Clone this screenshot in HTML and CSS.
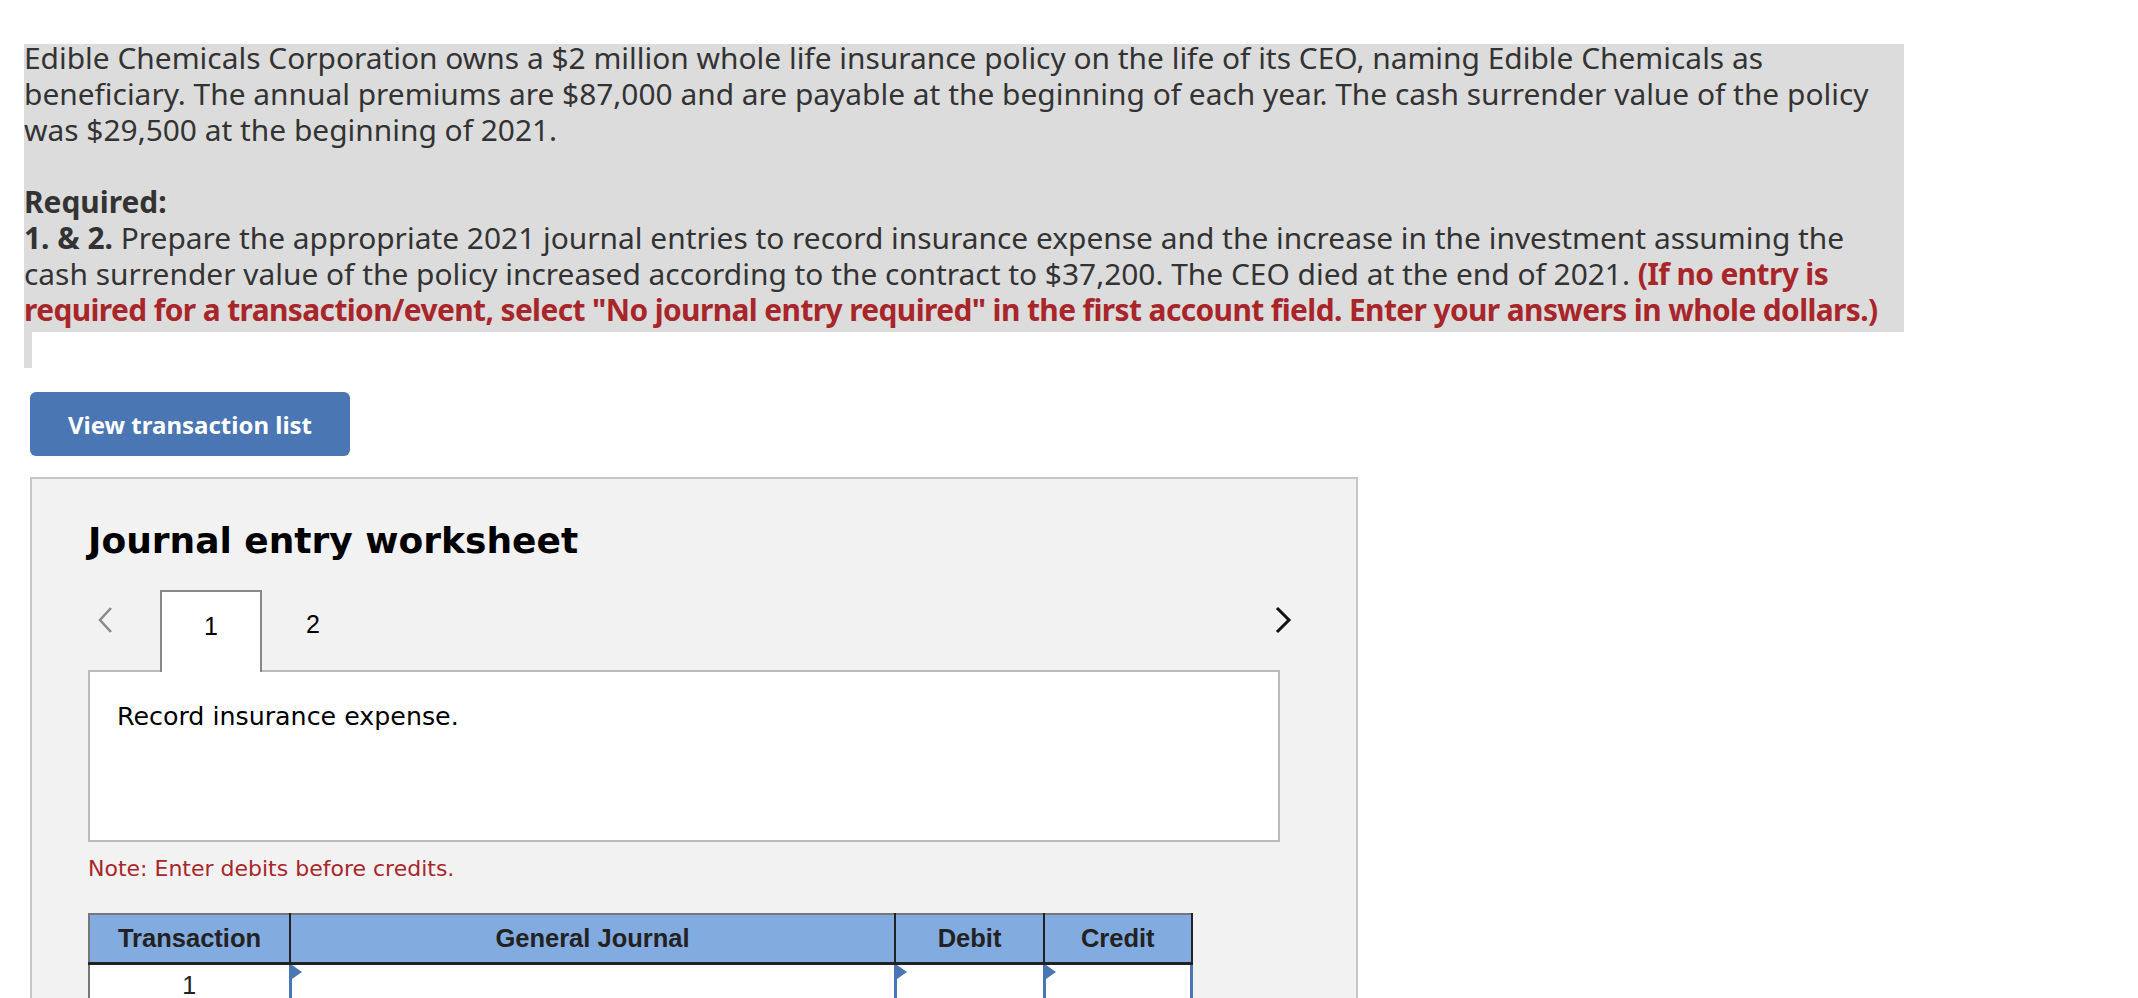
FILE: index.html
```html
<!DOCTYPE html>
<html>
<head>
<meta charset="utf-8">
<link rel="stylesheet" href="styles.css">
</head>
<body>
<div class="question">
  <p class="intro">Edible Chemicals Corporation owns a $2 million whole life insurance policy on the life of its CEO, naming Edible Chemicals as beneficiary. The annual premiums are $87,000 and are payable at the beginning of each year. The cash surrender value of the policy was $29,500 at the beginning of 2021.</p>
  <p class="required"><strong>Required:</strong><br><strong>1. &amp; 2.</strong> Prepare the appropriate 2021 journal entries to record insurance expense and the increase in the investment assuming the cash surrender value of the policy increased according to the contract to $37,200. The CEO died at the end of 2021. <strong class="warn">(If no entry is required for a transaction/event, select "No journal entry required" in the first account field. Enter your answers in whole dollars.)</strong></p>
</div>
<div class="spacer"></div>
<button class="btn">View transaction list</button>
<section class="panel">
  <h2 class="panel-title">Journal entry worksheet</h2>
  <div class="tabs">
    <span class="nav prev"><svg width="18" height="28" viewBox="0 0 18 28"><path d="M15 2 L4 14 L15 26" fill="none" stroke="#8a8a8a" stroke-width="2.5"/></svg></span>
    <span class="tab active">1</span>
    <span class="tab">2</span>
    <span class="tabs-fill"></span>
    <span class="nav next"><svg width="18" height="28" viewBox="0 0 18 28"><path d="M3 2 L15 14 L3 26" fill="none" stroke="#111" stroke-width="3"/></svg></span>
  </div>
  <div class="desc">Record insurance expense.</div>
  <p class="note">Note: Enter debits before credits.</p>
  <table class="journal">
    <thead>
      <tr><th class="c-tr">Transaction</th><th class="c-gj">General Journal</th><th class="c-dr">Debit</th><th class="c-cr">Credit</th></tr>
    </thead>
    <tbody>
      <tr><td class="c-tr">1</td><td class="inp"></td><td class="inp"></td><td class="inp"></td></tr>
    </tbody>
  </table>
</section>
</body>
</html>
```

FILE: styles.css
```css
* { box-sizing: border-box; }
body {
  margin: 0;
  background: #fff;
  font-family: "Noto Sans", "Open Sans", sans-serif;
  color: #333;
}
.question {
  display: flow-root;
  margin: 44px 0 0 24px;
  width: 1880px;
  padding: 0 6px 4px 0;
  background: #dcdcdc;
  font-size: 29.9px;
  line-height: 36px;
}
.question p { margin: 0; }
.question .intro { margin-top: -4px; }
.question .required { margin-top: 36px; }
.warn { color: #a8262a; letter-spacing: -0.6px; }
.spacer {
  margin-left: 24px;
  height: 36px;
  border-left: 8px solid #dcdcdc;
}
.btn {
  display: block;
  margin: 24px 0 0 30px;
  width: 320px;
  height: 64px;
  border: 0;
  border-radius: 6px;
  background: #4a76b3;
  color: #fff;
  font-family: "Noto Sans", sans-serif;
  font-weight: 700;
  font-size: 24px;
}
.panel {
  margin: 21px 0 0 30px;
  width: 1328px;
  height: 600px;
  border: 2px solid #c6c6c6;
  background: #f2f2f2;
  padding: 40px 0 0 56px;
}
.panel-title {
  margin: 0;
  font-family: "DejaVu Sans", sans-serif;
  font-weight: 700;
  font-size: 36px;
  line-height: 44px;
  color: #000;
}
.tabs {
  display: flex;
  margin-top: 27px;
  height: 80px;
  width: 1212px;
}
.nav { width: 72px; padding: 16px 0 0 8px; }
.nav.next { width: 26px; padding-left: 0; }
.tabs-fill { flex: 1; }
.tab {
  width: 102px;
  height: 82px;
  padding-top: 19px;
  text-align: center;
  font-family: "Liberation Sans", Arial, sans-serif;
  font-size: 25px;
  line-height: 30px;
  color: #000;
  position: relative;
  z-index: 1;
}
.tab.active {
  background: #fff;
  border: 2px solid #888;
  border-bottom: 0;
}
.desc {
  width: 1192px;
  height: 172px;
  background: #fff;
  border: 2px solid #bbb;
  padding: 30px 0 0 27px;
  font-family: "DejaVu Sans", sans-serif;
  font-size: 25.3px;
  line-height: 30px;
  color: #000;
}
.note {
  margin: 15px 0 0;
  font-family: "DejaVu Sans", sans-serif;
  font-size: 22px;
  line-height: 24px;
  color: #a8262a;
}
.journal {
  margin-top: 32px;
  width: 1105px;
  border-collapse: collapse;
  border-top: 2px solid #777;
  border-left: 2px solid #777;
  font-family: "Liberation Sans", Arial, sans-serif;
}
.journal th {
  height: 49px;
  background: #82abdf;
  color: #222;
  font-size: 25.5px;
  font-weight: 700;
  border-right: 2px solid #222;
  border-bottom: 3px solid #222;
  padding: 0;
}
.c-tr { width: 201px; }
.c-gj { width: 605px; }
.c-dr { width: 149px; }
.journal td {
  height: 60px;
  background: #fff;
  font-size: 25px;
  text-align: center;
  vertical-align: top;
  padding: 6px 0 0;
  color: #222;
}
.journal td.inp {
  position: relative;
  border: 3px solid #4a76b3;
}
.journal td.inp::before {
  content: "";
  position: absolute;
  left: 0;
  top: 0;
  border-left: 10px solid #4a76b3;
  border-top: 7px solid transparent;
  border-bottom: 7px solid transparent;
}
```
